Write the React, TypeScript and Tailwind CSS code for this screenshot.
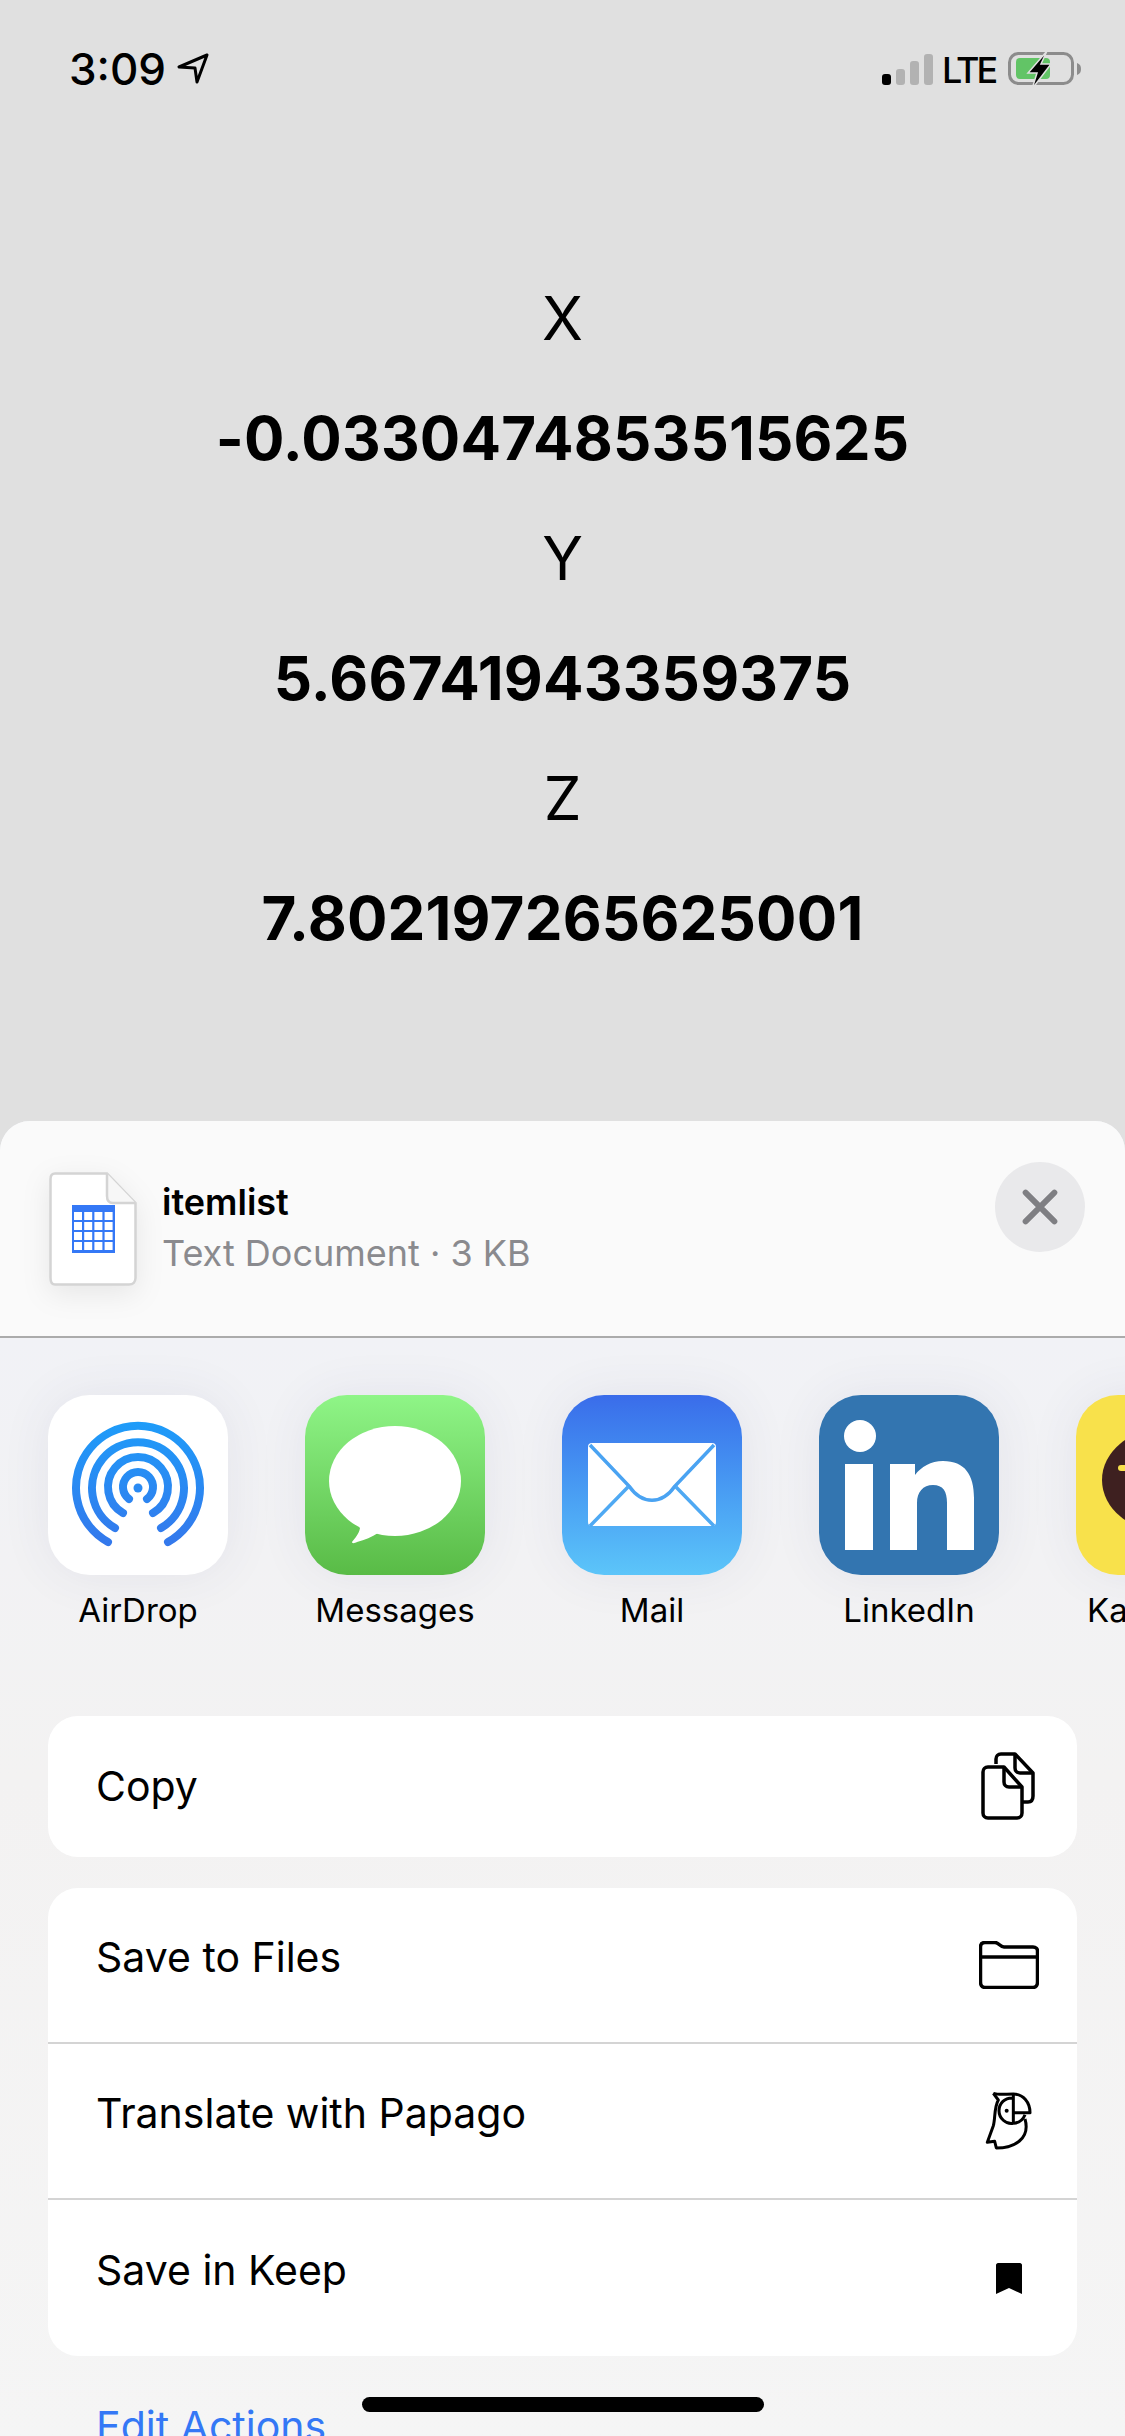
const font = "[font-family:Inter,'Liberation_Sans',sans-serif]";

function AirDropIcon() {
  const arcs = [
    { r: 62, dx: 30, dy: 54 },
    { r: 46, dx: 23, dy: 40 },
    { r: 30, dx: 15, dy: 25 },
    { r: 15, dx: 9, dy: 11 },
  ];
  return (
    <svg viewBox="0 0 180 180" className="w-full h-full">
      <defs>
        <linearGradient id="air" gradientUnits="userSpaceOnUse" x1="0" y1="27" x2="0" y2="150">
          <stop offset="0" stopColor="#1e9cf9" />
          <stop offset="1" stopColor="#3478ec" />
        </linearGradient>
      </defs>
      {arcs.map((a) => (
        <path
          key={a.r}
          d={`M${90 - a.dx} ${93 + a.dy}A${a.r} ${a.r} 0 1 1 ${90 + a.dx} ${93 + a.dy}`}
          fill="none"
          stroke="url(#air)"
          strokeWidth="8"
          strokeLinecap="round"
        />
      ))}
      <circle cx="90" cy="93" r="4.5" fill="#2a8af3" />
    </svg>
  );
}

function MessagesIcon() {
  return (
    <svg viewBox="0 0 180 180" className="w-full h-full">
      <ellipse cx="90" cy="86" rx="66" ry="55" fill="#fff" />
      <path d="M52 128L55 133C54 139 50 143 47 147C47 149 50 148 52 147C60 145 67 142 73 138L80 128Z" fill="#fff" />
    </svg>
  );
}

function MailIcon() {
  return (
    <svg viewBox="0 0 180 180" className="w-full h-full">
      <rect x="26" y="48" width="128" height="83" rx="4" fill="#fff" />
      <path d="M28 50L67 91C80 110 100 110 113 91L152 50" fill="none" stroke="#4aa3f2" strokeWidth="3.5" />
      <path d="M28 131L66 92M152 131L114 92" fill="none" stroke="#4fa9f3" strokeWidth="3.5" />
    </svg>
  );
}

function LinkedInIcon() {
  return (
    <svg viewBox="0 0 180 180" className="w-full h-full">
      <ellipse cx="41" cy="41" rx="16" ry="16" fill="#fff" />
      <rect x="26" y="69" width="28" height="86" fill="#fff" />
      <path
        d="M71 69H96V80C102 72 112 66 124 66C146 66 155 80 155 103V155H128V108C128 96 124 90 114 90C104 90 98 97 98 108V155H71Z"
        fill="#fff"
      />
    </svg>
  );
}

function KakaoIcon() {
  return (
    <svg viewBox="0 0 180 180" className="w-full h-full">
      <ellipse cx="90" cy="85" rx="64" ry="52" fill="#3e2020" />
      <rect x="42" y="70" width="16" height="6" rx="3" fill="#f8e14b" />
    </svg>
  );
}

const apps = [
  { name: "AirDrop", bg: "bg-white", Icon: AirDropIcon },
  { name: "Messages", bg: "bg-gradient-to-b from-[#8ff587] to-[#59bb46]", Icon: MessagesIcon },
  { name: "Mail", bg: "bg-gradient-to-b from-[#3a6cea] to-[#5cc5f9]", Icon: MailIcon },
  { name: "LinkedIn", bg: "bg-[#3375b0]", Icon: LinkedInIcon },
  { name: "KakaoTalk", bg: "bg-[#f8e14b]", Icon: KakaoIcon },
];

function CopyIcon() {
  return (
    <svg viewBox="0 0 60 72" className="w-[60px] h-[72px]" fill="none" stroke="#000" strokeWidth="3.5" strokeLinejoin="round">
      <path d="M17 13V8C17 5 19 3 22 3H36L54 22V45C54 49 52 51 49 51H43" />
      <path d="M36 3V17C36 20 38 22 41 22H54" />
      <path d="M9 16H25L43 36V62C43 65 41 67 38 67H9C6 67 4 65 4 62V21C4 18 6 16 9 16Z" />
      <path d="M25 16V31C25 34 27 36 30 36H43" />
    </svg>
  );
}

function FolderIcon() {
  return (
    <svg viewBox="0 0 60 48" className="w-[60px] h-[48px]" fill="none" stroke="#000" strokeWidth="3.5" strokeLinejoin="round">
      <path d="M6 1.5H16C20 1.5 21 6 25 6H54C57 6 58.5 8 58.5 10V41C58.5 44 57 46.5 54 46.5H6C3 46.5 1.5 44 1.5 41V6C1.5 3 3 1.5 6 1.5Z" />
      <path d="M1.5 16H58.5" />
    </svg>
  );
}

function ParrotIcon() {
  return (
    <svg viewBox="0 0 210 225" className="w-[70px] h-[75px]" fill="none" stroke="#000" strokeWidth="9" strokeLinejoin="round">
      <path d="M58 28C75 33 95 30 118 30C148 30 168 55 168 86H120" />
      <path d="M58 28L73 48C60 70 64 105 58 125L40 175L62 172L67 192C120 192 170 165 153 105" />
      <path d="M118 30V118C95 122 75 102 75 80C75 58 92 40 118 42" />
      <path d="M120 118C135 116 148 105 153 92" />
      <circle cx="98" cy="80" r="6" fill="#000" stroke="none" />
    </svg>
  );
}

function BookmarkIcon() {
  return (
    <svg viewBox="0 0 26 31" className="w-[26px] h-[31px]">
      <path d="M2 0H24C25 0 26 1 26 2V31L13 25L0 31V2C0 1 1 0 2 0Z" fill="#000" />
    </svg>
  );
}

function ActionRow({ label, icon, divided, shift }: { label: string; icon: React.ReactNode; divided?: boolean; shift?: boolean }) {
  return (
    <div className={`flex items-center justify-between h-[156px] pl-[48px] pr-[33px] ${divided ? "border-b-2 border-[#d4d4d4]" : ""}`}>
      <span className={`text-[41px] text-black ${shift ? "pb-[14px]" : ""}`}>{label}</span>
      <div className="w-[70px] flex items-center justify-center">{icon}</div>
    </div>
  );
}

export default function App() {
  const values = [
    ["X", "-0.0330474853515625"],
    ["Y", "5.66741943359375"],
    ["Z", "7.802197265625001"],
  ];

  return (
    <div className={`relative h-[2436px] w-[1125px] overflow-hidden bg-[#e0e0e0] text-black ${font}`}>
      {/* Top area */}
      <div className="h-[1121px]">
        <div className="flex items-start justify-between pl-[69px] pr-[43px] pt-[52px] h-[258px]">
          <div className="flex items-start gap-[11px]">
            <span className="text-[44px] leading-[34px] font-medium">3:09</span>
            <svg viewBox="0 0 32 31" className="w-[32px] h-[31px] mt-[1px]" fill="none" stroke="#000" strokeWidth="3" strokeLinejoin="round">
              <path d="M30 2L2 14L18 15L20 29Z" />
            </svg>
          </div>
          <div className="flex items-start">
            <div className="flex items-end gap-[5px] h-[32px] mt-[1px]">
              <div className="w-[9px] h-[11px] rounded-[3px] bg-black" />
              <div className="w-[9px] h-[16px] rounded-[3px] bg-[#b2b2b2]" />
              <div className="w-[9px] h-[24px] rounded-[3px] bg-[#b2b2b2]" />
              <div className="w-[9px] h-[31px] rounded-[3px] bg-[#b2b2b2]" />
            </div>
            <span className="ml-[9px] text-[36px] leading-[38px] font-medium tracking-[-3px] w-[62px] -mt-[1px]">LTE</span>
            <svg viewBox="0 0 78 38" className="w-[78px] h-[38px] -mt-[1px]">
              <rect x="5.5" y="2.5" width="63" height="30" rx="9" fill="none" stroke="#8c8c8c" strokeWidth="3" />
              <rect x="12" y="7" width="34" height="21" rx="4" fill="#62c466" />
              <path d="M73 12C76 13 77 15 77 18C77 21 76 23 73 24Z" fill="#8c8c8c" />
              <path d="M43 0L24 22H33L28 38L47 13H37Z" fill="#000" stroke="#e0e0e0" strokeWidth="1.5" />
            </svg>
          </div>
        </div>
        <div className="flex flex-col items-center">
          {values.map(([axis, value]) => (
            <div key={axis} className="flex flex-col items-center">
              <span className="text-[60px] leading-[120px]">{axis}</span>
              <span className="text-[60px] leading-[120px] font-bold tracking-[0.2px]">{value}</span>
            </div>
          ))}
        </div>
      </div>

      {/* Share sheet */}
      <div className="h-[1315px] rounded-t-[30px] overflow-hidden bg-gradient-to-b from-[#f0f2f8] via-[#f3f2f2] to-[#f5f5f5]">
        <div className="h-[217px] bg-[#fafafa] border-b-2 border-[#ababab] flex items-start pl-[49px] pr-[40px]">
          <svg viewBox="0 0 88 114" className="w-[88px] h-[114px] mt-[51px] shrink-0 drop-shadow-[0_8px_14px_rgba(0,0,0,0.08)]">
            <path d="M6 1.5H58L86.5 31V106C86.5 110 84 112.5 80 112.5H6C3 112.5 1.5 110 1.5 106V7C1.5 3 3 1.5 6 1.5Z" fill="#fff" stroke="#d4d4d4" strokeWidth="2.5" />
            <path d="M58 1.5V24C58 28 60 31 64 31H86.5" fill="#f7f7f7" stroke="#d4d4d4" strokeWidth="2.5" />
            <rect x="23" y="33" width="43" height="48" fill="#3478f6" />
            {[0, 1, 2, 3].map((row) =>
              [0, 1, 2, 3].map((col) => (
                <rect key={`${row}-${col}`} x={25 + col * 10.2} y={40 + row * 10} width="8" height="8" fill="#fff" />
              ))
            )}
          </svg>
          <div className="ml-[25px] mt-[61px] flex flex-col">
            <span className="text-[36px] leading-[40px] font-semibold">itemlist</span>
            <span className="text-[36px] leading-[40px] mt-[11px] text-[#8a8a8e]">Text Document · 3 KB</span>
          </div>
          <div className="ml-auto mt-[41px] w-[90px] h-[90px] rounded-full bg-[#e9e9eb] flex items-center justify-center">
            <svg viewBox="0 0 40 40" className="w-[36px] h-[36px]" fill="none" stroke="#7f7f83" strokeWidth="6.5" strokeLinecap="round">
              <path d="M4 4L36 36M36 4L4 36" />
            </svg>
          </div>
        </div>

        <div className="flex gap-[77px] pl-[48px] pt-[57px] h-[378px] overflow-hidden w-[1125px]">
          {apps.map(({ name, bg, Icon }) => (
            <div key={name} className="w-[180px] shrink-0 flex flex-col items-center">
              <div className={`w-[180px] h-[180px] rounded-[42px] overflow-hidden shadow-[0_0_50px_rgba(60,70,110,0.08)] ${bg}`}>
                <Icon />
              </div>
              <span className="mt-[15px] text-[33px] leading-[40px] whitespace-nowrap">{name}</span>
            </div>
          ))}
        </div>

        <div className="flex flex-col gap-[31px] px-[48px]">
          <div className="h-[141px] rounded-[30px] bg-white flex items-center justify-between pl-[48px] pr-[33px]">
            <span className="text-[41px]">Copy</span>
            <div className="w-[70px] flex items-center justify-center"><CopyIcon /></div>
          </div>
          <div className="rounded-[30px] bg-white overflow-hidden">
            <ActionRow label="Save to Files" icon={<FolderIcon />} divided shift />
            <ActionRow label="Translate with Papago" icon={<ParrotIcon />} divided shift />
            <ActionRow label="Save in Keep" icon={<BookmarkIcon />} shift />
          </div>
        </div>
        <div className="pl-[96px] pt-[45px] text-[41px] leading-[50px] text-[#3478f6]">Edit Actions</div>
      </div>

      {/* Home indicator */}
      <div className="absolute left-[362px] top-[2397px] w-[402px] h-[15px] rounded-full bg-black" />
    </div>
  );
}
